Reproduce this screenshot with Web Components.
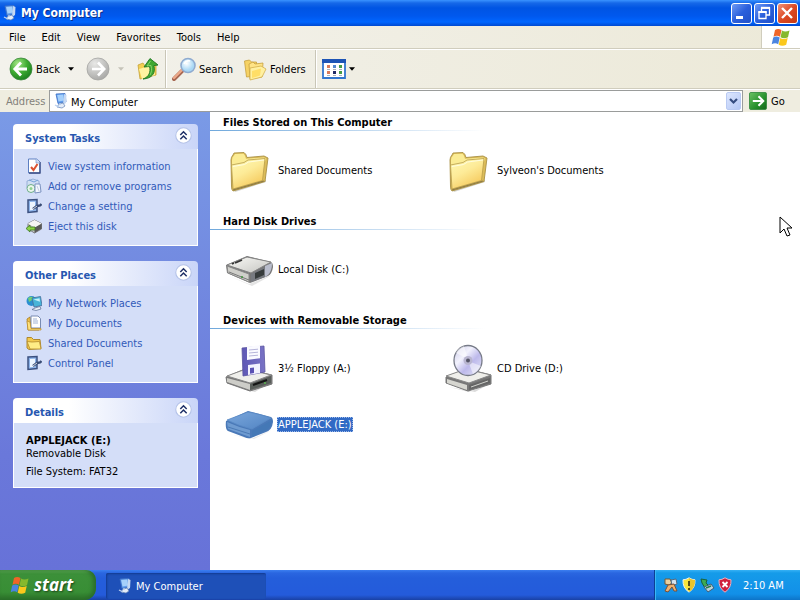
<!DOCTYPE html>
<html lang="en">
<head>
<meta charset="utf-8">
<title>My Computer</title>
<style>
html,body{margin:0;height:100%}
body{font:11px/15px "DejaVu Sans Condensed","DejaVu Sans",Tahoma,sans-serif;color:#000;background:#fff;overflow:hidden}
</style>
</head>
<body>
<xp-desktop></xp-desktop>
<script>
const icons = {
computer:['0 0 16 16',`<path d="M3 1l9-.5 1 8.500-8 1.500z" fill="#5f9bea" stroke="#3c6fc4" stroke-width=".8"/><path d="M4.200 2l6-.4.8 6-5.500 1z" fill="#a5d0fb"/><path d="M11 1l2.500 1-.5 8-3 2z" fill="#c5d8f2"/><path d="M6 11l4-1 2 3-3 2-5-1z" fill="#e5edf8" stroke="#6383b5" stroke-width=".7"/><path d="M2 12l4 2M7 10v2" stroke="#b9cfee" stroke-width="1.300"/>`],
flag:['0 0 20 18',`<path d="M4 2q3-2 6.500 0L9 8.800q-3-2-6.500 0z" fill="#ef6528"/><path d="M11 2.500q3 2 7.500 0L17 9.200q-4 2-7.500 0z" fill="#86b92d"/><path d="M2.200 9.500q3-2 6.500 0L7.200 16.200q-3-2-6.500 0z" fill="#4a84e0"/><path d="M9.200 10q3 2 7.500 0L15.200 16.700q-4 2-7.500 0z" fill="#fbc81c"/>`],
back:['0 0 24 24',`<defs><radialGradient id="g" cx=".35" cy=".25" r=".85"><stop offset="0" stop-color="#a5e586"/><stop offset=".5" stop-color="#3fac32"/><stop offset="1" stop-color="#14781b"/></radialGradient></defs><circle cx="12" cy="12" r="11" fill="url(#g)" stroke="#3a873b" stroke-width=".8"/><path d="M12 5.500L5.800 12l6.200 6.500M6.500 12H18" fill="none" stroke="#fff" stroke-width="2.800"/>`],
forward:['0 0 24 24',`<defs><radialGradient id="g" cx=".35" cy=".25" r=".85"><stop offset="0" stop-color="#e8e8e6"/><stop offset="1" stop-color="#a3a3a1"/></radialGradient></defs><circle cx="12" cy="12" r="11" fill="url(#g)" stroke="#a5a5a2" stroke-width=".8"/><path d="M12 5.500l6.200 6.500-6.200 6.500M17.500 12H6" fill="none" stroke="#fff" stroke-width="2.600"/>`],
up:['0 0 24 24',`<path d="M2 8l5-2 2 3 11-3v12L4 22z" fill="#f3cf52" stroke="#c5a238" stroke-width=".8"/><path d="M3 12l14-4 2 10-13 4z" fill="#fff3a1"/><path d="M7 22c6-2 8-7 6.500-12.500L8 10l6-8.500L22 8l-4.200.6C20 16 16 21.500 7 22z" fill="#3fa832" stroke="#1d7623" stroke-width=".9"/><path d="M14.500 4l-3.500 5 4-.5c1 4 .5 7-1 9.500" fill="none" stroke="#8ed872" stroke-width=".9"/>`],
search:['0 0 24 24',`<defs><radialGradient id="g" cx=".4" cy=".35"><stop offset="0" stop-color="#fff"/><stop offset="1" stop-color="#a9d8f5"/></radialGradient></defs><path d="M2 22l8-8" stroke="#a5644f" stroke-width="4" stroke-linecap="round"/><path d="M2 21l8-8" stroke="#eca98a" stroke-width="2.400" stroke-linecap="round"/><circle cx="16" cy="8.500" r="7" fill="url(#g)" stroke="#8fabd0" stroke-width="1.600"/><path d="M12 7q2-4 6-3" fill="none" stroke="#fff" stroke-width="1.500"/>`],
folders:['0 0 24 24',`<path d="M1.500 4l5-1 2 2h5v14l-10 1z" fill="#f6d264" stroke="#c69f3c" stroke-width=".8"/><path d="M6 7l4-2 2 2 8-1-1 14-12 2z" fill="#ffe486" stroke="#c69f3c" stroke-width=".8"/><path d="M7 11l11-2 5 3-4 8-12 3z" fill="#fff0a0" stroke="#d3b04d" stroke-width=".8"/><path d="M9 14l9-2.500-1 7L9 21z" fill="#ffde66"/>`],
views:['0 0 24 20',`<path d="M1 1h22v18H1z" fill="#fff" stroke="#3176cf" stroke-width="1.800"/><path d="M0 0h24v4H0z" fill="#1d54b5"/><path fill="#d87a5a" d="M5 6h3v3H5zM5 12h3v3H5z"/><path fill="#5689cf" d="M11 6h3v3h-3z"/><path fill="#469b46" d="M17 6h3v3h-3zM17 12h3v3h-3z"/><path fill="#222b67" d="M11 12h3v3h-3z"/><path stroke="#a9b2b8" d="M5 10.500h3m3 0h3m3 0h3M5 16.500h3m3 0h3m3 0h3"/>`],
go:['0 0 19 19',`<defs><linearGradient id="g" x2="1" y2="1"><stop stop-color="#6dc364"/><stop offset=".6" stop-color="#26902b"/><stop offset="1" stop-color="#15661b"/></linearGradient></defs><rect x=".5" y=".5" width="18" height="18" rx="1.500" fill="url(#g)" stroke="#3c8f45"/><path d="M4 9.500h10M10 4.500l5 5-5 5" fill="none" stroke="#fff" stroke-width="2.200"/>`],
chevron:['0 0 9 7',`<path d="M1 1l3.500 3.500L8 1" fill="none" stroke="#354d80" stroke-width="2.200"/>`],
caret:['0 0 7 4',`<path d="M0 0h7L3.500 4z" fill="currentColor"/>`],
collapse:['0 0 16 16',`<circle cx="8" cy="8" r="7.300" fill="#fff" stroke="#b4c2e8"/><path d="M5 7.500l3-3 3 3M5 11.500l3-3 3 3" fill="none" stroke="#1e2f66" stroke-width="1.400"/>`],
min:['0 0 20 20',`<path d="M5 13h7v3H5z" fill="#fff"/>`],
restore:['0 0 20 20',`<path d="M7.500 8V5h8v7H12" fill="none" stroke="#fff" stroke-width="1.300"/><path d="M7 4.800h9" stroke="#fff" stroke-width="2"/><path d="M5 9h7v6.500H5z" fill="none" stroke="#fff" stroke-width="1.300"/><path d="M4.400 9h8.200" stroke="#fff" stroke-width="2"/>`],
close:['0 0 20 20',`<path d="M5 5l10 10M15 5L5 15" stroke="#fff" stroke-width="2.400"/>`],
info:['0 0 16 16',`<path d="M2.500 1h8L14 4v11H2.500z" fill="#fff" stroke="#5c7fc2"/><path d="M14 4v11H3" fill="none" stroke="#3b4c83" stroke-width="1.300"/><path d="M10 1v4h4" fill="#cfddf6" stroke="#7c98cf" stroke-width=".7"/><path d="M5 9l2.500 3L11.500 6" fill="none" stroke="#dc5332" stroke-width="2"/>`],
programs:['0 0 16 16',`<path d="M1 3l6-2 6 2v8l-7 1-5-2z" fill="#d0def4" stroke="#8aa4d0" stroke-width=".8"/><path d="M3 2l5 2 4-2" fill="none" stroke="#76a3d9"/><circle cx="5" cy="10.500" r="4" fill="#ecf6ee" stroke="#6fae8a"/><circle cx="5" cy="10.500" r="1.500" fill="#8fd491"/><path d="M9 6h5l1 8-6 1z" fill="#f4f8ff" stroke="#7a91bf"/><path d="M11 8l2 5" stroke="#c3cee2"/>`],
setting:['0 0 16 16',`<path d="M2 2l9-.5v12L2 14.500z" fill="#8db4ea" stroke="#3c5180" stroke-width="1.500"/><path d="M4 4l5-.3v8L4 12.300z" fill="#eef6ff"/><path d="M7 11l4-3 3-.5 1.500-1.500" fill="none" stroke="#394c75" stroke-width="2.400"/><path d="M7 11l4-3" stroke="#d3d9e4"/>`],
eject:['0 0 16 16',`<path d="M2 5.500L8.500 2l7 3.500V11l-7 4-6.500-4z" fill="#c9c9c9" stroke="#646464" stroke-width=".8"/><path d="M8.500 9.500V15l7-4.500v-5z" fill="#585858"/><path d="M2 5.500L8.500 2l7 3.500-7 4z" fill="#f5f5f5"/><path d="M0 10.500L4 7v2h5v3H4v2z" fill="#8bd448" stroke="#3c7424" stroke-width=".8"/>`],
network:['0 0 16 16',`<circle cx="5.500" cy="6" r="5" fill="#2b8fd0"/><path d="M2 3q3-2 5-1l-1 3-3 2z" fill="#72cf74"/><path d="M6 3l8.500-1.500 1.500 9-8 1.500z" fill="#48b4d8" stroke="#436c99" stroke-width=".8"/><path d="M7.500 4.500l6-1.200.5 3.500z" fill="#c4f1fa"/><path d="M9 13l5-1.500 1 2.500-5 1.500-4-1z" fill="#eef2f8" stroke="#54688e" stroke-width=".7"/>`],
documents:['0 0 16 16',`<path d="M1 4l3-2 1 12 9-1-1 2H2z" fill="#ecc04b" stroke="#a87b20" stroke-width=".8"/><path d="M5 1h7l2.500 2.500V13H5z" fill="#fff" stroke="#788bb3"/><path d="M7 4h4M7 6h5M7 8h5" stroke="#a0b2d4"/><path d="M1 6l3 1 1 6.500H15v1.500H2z" fill="#ffe27c" stroke="#b78a2b" stroke-width=".7"/>`],
smallfolder:['0 0 16 16',`<path d="M1 4V2.500h4.500l2 2H14l1 9-12 1L1 13z" fill="#f3c94d" stroke="#a78022" stroke-width=".9"/><path d="M1 6.500l5 .5 7.500-.5L15 14H4z" fill="#ffec86" stroke="#b99132" stroke-width=".9"/>`],
folder:['0 0 48 48',`<defs><linearGradient id="g" x2=".6" y2="1"><stop stop-color="#fffab4"/><stop offset=".5" stop-color="#fdeb98"/><stop offset="1" stop-color="#f5c95c"/></linearGradient></defs><path d="M8 43l33-9v2L10 46z" fill="#aaa9a0" opacity=".5"/><path d="M6 14q0-3 2-5l1-2 10-.5q2 1 3 5l17-1.500 4 2-3 23.500-32 9.500q-1.500-1-1.500-5z" fill="#dcbc58" stroke="#a99145" stroke-width=".9" stroke-linejoin="round"/><path d="M7 14q0-3 2-4.500l1-1.500 8.500-.3q1.500 1 2.500 5l18-1.200 2 1-1 3-33 6z" fill="#fbec94"/><path d="M6.500 19l12.500-2.500L23 14l17-1.500L37.500 34.500 8 43z" fill="url(#g)" stroke="#b79d4b" stroke-width=".8"/><path d="M8 20.500l11.500-2 4-2.500L39 14" stroke="#fffde0" fill="none"/><path d="M8 44l31-9" stroke="#8d7a44" stroke-width="1.300"/>`],
disk:['0 0 48 48',`<defs><linearGradient id="g" x2="1" y2="1"><stop stop-color="#f9f9f6"/><stop offset="1" stop-color="#c5c5c1"/></linearGradient></defs><path d="M4 31l20 8 23-9-20 11z" fill="#777" opacity=".2"/><path d="M1 20L22 11l24 6q2 1 2 5-1 7-5 9L25 38 2 28z" fill="#777"/><path d="M2 20l20-8 24 5-20 11z" fill="url(#g)" stroke="#858585"/><path d="M2 21l22 8v8L3 28z" fill="#cfcfca" stroke="#888"/><path d="M26 29l14-7v10l-14 5z" fill="#777a80"/><path d="M30 28l9-4v6l-9 4z" fill="#363b3b"/><path d="M40 21l7-3q0 8-4 12l-3 2z" fill="#b9bdcc"/><path d="M10 18l7-3M7 19l2-1" stroke="#333" stroke-width="1.800"/><path d="M4 27l20 8" stroke="#777"/><circle cx="17" cy="32" r="1" fill="#3e943b"/>`],
floppy:['0 0 48 48',`<defs><linearGradient id="g" x2="1"><stop stop-color="#5e57b5"/><stop offset="1" stop-color="#7973c5"/></linearGradient></defs><path d="M5 42l20 5 21-9-16 10z" fill="#888" opacity=".3"/><path d="M1 33l19-8 27 6v9L25 47 2 39z" fill="#777" stroke="#777"/><path d="M2 32l19-7 25 6-21 8z" fill="#efefeb" stroke="#888"/><path d="M2 34l23 6v6L2 38z" fill="#cdcdc8"/><path d="M25 40l21-8v7L25 46z" fill="#585d59"/><path d="M28 41l14-5" stroke="#151515" stroke-width="2"/><circle cx="40" cy="39" r="1" fill="#57b64e"/><path d="M17 4l22-2 1 26-22 4z" fill="url(#g)" stroke="#5b549f" stroke-width=".8"/><path d="M22 2.500l13-1.200v13L22 16z" fill="#fafaff"/><path d="M24 6l9-.8M24 9l9-.8M24 12l9-.8" stroke="#b7b5da"/><path d="M23 21l12-1.500V29l-12 2z" fill="#f3f2ff"/><path d="M25 24l4-.5V29l-4 .7z" fill="#5a51b4"/>`],
cd:['0 0 48 48',`<defs><linearGradient id="g" x2="1" y2="1"><stop stop-color="#c8c7e4"/><stop offset=".35" stop-color="#f2f2fd"/><stop offset=".6" stop-color="#bdb9eb"/><stop offset="1" stop-color="#e7e9f8"/></linearGradient></defs><path d="M5 43l20 5 22-9-16 9z" fill="#888" opacity=".3"/><path d="M2 33l21-8 24 6v9l-23 7-22-8z" fill="#777" stroke="#777"/><path d="M2 32l20-7 25 6-22 8z" fill="#efefeb" stroke="#888"/><path d="M3 35l20 6v5L3 39z" fill="#d6d6d0"/><path d="M25 41l21-7v5l-21 7z" fill="#666"/><path d="M27 43l17-6" stroke="#d1d2cd"/><ellipse cx="24" cy="16.500" rx="14" ry="15" fill="url(#g)" stroke="#777b88" stroke-width="1.300"/><path d="M24 15L12 9q2-5 8-7zM24 17l13 5q-3 6-8 8z" fill="#fff" opacity=".5"/><circle cx="24" cy="16.500" r="4.500" fill="#b9b6d0"/><circle cx="24" cy="16.500" r="2" fill="#555567"/>`],
usb:['0 0 48 48',`<defs><linearGradient id="g" x2="1" y2="1"><stop stop-color="#7ba7dc"/><stop offset="1" stop-color="#5184c3"/></linearGradient></defs><path d="M4 34l22 5 21-9-18 9z" fill="#888" opacity=".2"/><path d="M1 21L23 11l23 6q2 1 2 5-1 8-7 10l-15 6q-3 1-7-1L3 31q-3-2-2-10z" fill="#4a79b8"/><path d="M2 20l21-8q12 2 23 6l-19 11q-13-3-25-9z" fill="url(#g)" stroke="#5c8cc7" stroke-width=".8"/><path d="M2 22q11 5 23 8v7L3 29z" fill="#6f9bd0"/><path d="M27 31l20-11q-1 7-5 10l-15 7z" fill="#4478b6"/><path d="M3 27l22 7" stroke="#4b7ab5"/>`],
keys:['0 0 16 16',`<path d="M2 2h5l2 4-3 2-4-1z" fill="#e8d0a0" stroke="#765833"/><path d="M8 3l5-1 1 5-5 2z" fill="#d5e3ee" stroke="#516a81"/><path d="M5 8l6-1 3 7h-3l-2-4-4 5-3-1z" fill="#edb170" stroke="#795138"/>`],
shield:['0 0 16 16',`<path d="M8 .8q3 2 6 2 .5 8-6 12.400Q1.500 11 2 2.800q3 0 6-2z" fill="#f8e53c" stroke="#e8eef0"/><path d="M8 1q3 2 6 2 .5 8-6 12z" fill="#e8c52c"/><path d="M8 4v5M8 11v2" stroke="#443f16" stroke-width="1.800"/>`],
device:['0 0 16 16',`<path d="M2 2l6 1-1 3 3 3-4 2-3-5z" fill="#3eaa55" stroke="#19633d"/><path d="M5 10l7-3 3 4-6 4z" fill="#bed4dc" stroke="#405e77"/><path d="M7 11l5-2" stroke="#29784a" stroke-width="1.500"/>`],
alert:['0 0 16 16',`<path d="M8 .8q3 2 6 2 .5 8-6 12.400Q1.500 11 2 2.800q3 0 6-2z" fill="#cf203e" stroke="#eab1c0"/><path d="M5.500 5l5 5m0-5l-5 5" stroke="#fff" stroke-width="1.800"/>`],
pointer:['0 0 14 22',`<path d="M1 1v16l4-4 3 7 3-1-3-7h5z" fill="#fff" stroke="#000" stroke-linejoin="round"/>`]
};

const define = (name, css, html) => customElements.define(name, class extends HTMLElement {
  constructor() {
    super();
    const t = document.createElement('template');
    t.innerHTML = `<style>*{box-sizing:border-box}button{font:inherit;color:inherit;background:none;border:0;padding:0;margin:0;text-align:left}a{color:inherit;text-decoration:none}${css}</style>` + (typeof html === 'function' ? html(this) : html);
    this.attachShadow({mode:'open'}).append(t.content.cloneNode(true));
  }
});

define('xp-icon', ':host{display:block;flex:none}svg{display:block}', e => {
  const [box, art] = icons[e.getAttribute('name')];
  return `<svg viewBox="${box}" width="${e.getAttribute('w') || 16}" height="${e.getAttribute('h') || e.getAttribute('w') || 16}" aria-hidden="true">${art}</svg>`;
});

define('xp-titlebar', `
:host{display:flex;align-items:center;flex:none;height:26px;padding:0 2px 0 2px;gap:2px;color:#fff;background:linear-gradient(#3a93ff 0,#1668e8 3px,#0054e3 8px,#0058ee 16px,#0066ff 22px,#0049d0 26px)}
h1{flex:1;margin:0 0 0 1px;font:bold 12px/16px "DejaVu Sans Condensed","DejaVu Sans",sans-serif;text-shadow:1px 1px #0a2f8a}
button{width:21px;height:21px;border:1px solid #fff;border-radius:3px;background:linear-gradient(135deg,#6f9bf5,#2a5fdc 50%,#2150c8)}
.close{background:linear-gradient(135deg,#f0937a,#dd4a24 50%,#c63a14)}
button xp-icon{margin:-1px}`,
`<xp-icon name="computer" w="16"></xp-icon><h1><slot></slot></h1>
<button aria-label="Minimize"><xp-icon name="min" w="20"></xp-icon></button><button aria-label="Restore"><xp-icon name="restore" w="20"></xp-icon></button><button class="close" aria-label="Close"><xp-icon name="close" w="20"></xp-icon></button>`);

define('xp-menubar', `
:host{display:flex;flex:none;height:23px;background:linear-gradient(90deg,#f4f3ee,#ece9d8);border-bottom:1px solid #d0cdbd}
nav{display:flex;flex:1;padding-left:1px}button{padding:0 8px}
.flag{display:grid;place-items:center;width:39px;background:#fff;border-left:1px solid #d0cdbd}`,
`<nav><button>File</button><button>Edit</button><button>View</button><button>Favorites</button><button>Tools</button><button>Help</button></nav><div class="flag"><xp-icon name="flag" w="20" h="18"></xp-icon></div>`);

define('xp-toolbar', `
:host{display:flex;align-items:center;flex:none;height:40px;padding-left:9px;background:linear-gradient(90deg,#f3f2ec,#ece9d8);border-top:1px solid #fff;border-bottom:1px solid #d0cdbd}
button{display:flex;align-items:center;gap:3px}
.caret{padding:6px 4px;margin-left:4px}.off{color:#c5c3b8}.fwd,.up{margin-left:8px}
hr{align-self:stretch;width:2px;margin:0 5px;border:0;border-left:1px solid #c9c6b7;border-right:1px solid #fff}
.folders{margin-left:10px}.second{margin-left:9px}`,
`<button><xp-icon name="back" w="24"></xp-icon>Back</button><button class="caret" aria-label="Back history"><xp-icon name="caret" w="6" h="4"></xp-icon></button>
<button class="fwd" aria-label="Forward" disabled><xp-icon name="forward" w="24"></xp-icon></button><button class="caret off" aria-label="Forward history" disabled><xp-icon name="caret" w="6" h="4"></xp-icon></button>
<button class="up" aria-label="Up"><xp-icon name="up" w="24"></xp-icon></button><hr>
<button><xp-icon name="search" w="24"></xp-icon>Search</button><button class="folders"><xp-icon name="folders" w="24"></xp-icon>Folders</button><hr class="second">
<button aria-label="Views"><xp-icon name="views" w="24" h="20"></xp-icon><xp-icon name="caret" w="6" h="4"></xp-icon></button>`);

define('xp-address', `
:host{display:flex;align-items:stretch;flex:none;height:23px;background:#efede0;border-top:1px solid #fff}
label{display:flex;align-items:center;width:49px;padding-left:6px;color:#83817a}
.field{display:flex;align-items:center;flex:1;gap:2px;padding:0 1px 0 3px;background:#fff;border:1px solid #9a9c9b}
input{flex:1;min-width:0;padding:2px 0 0;border:0;outline:0;font:inherit;color:inherit;background:none}
.drop{display:grid;place-items:center;width:15px;height:18px;border-radius:2px;background:linear-gradient(135deg,#dce6fe,#b5c8f5);border:1px solid #b9caf3}
.go{display:flex;align-items:center;gap:4px;width:57px;padding-left:6px}`,
`<label for="a">Address</label><div class="field"><xp-icon name="computer" w="16"></xp-icon><input id="a" value="My Computer"><button class="drop" aria-label="Show addresses"><xp-icon name="chevron" w="9" h="7"></xp-icon></button></div><button class="go"><xp-icon name="go" w="18"></xp-icon>Go</button>`);

define('xp-panel', `
:host{display:block}
header{display:flex;align-items:center;justify-content:space-between;height:25px;padding:0 6px 0 12px;border-radius:4px 4px 0 0;background:linear-gradient(90deg,#fff 30%,#c9d5f8)}
h2{margin:4px 0 0;font:bold 11px/15px "DejaVu Sans Condensed","DejaVu Sans",sans-serif;color:#2757b0}
button{margin-bottom:2px}
.body{padding:7px 12px 9px;border:1px solid #fff;border-top:0;background:#d4def8}`,
e => `<header><h2>${e.getAttribute('heading')}</h2><button aria-label="Collapse"><xp-icon name="collapse" w="17"></xp-icon></button></header><div class="body"><slot></slot></div>`);

define('xp-task', `:host{display:block}a{display:flex;align-items:center;gap:6px;height:20px;color:#315ab9}`,
e => `<a href="#"><xp-icon name="${e.getAttribute('icon')}" w="16"></xp-icon><slot></slot></a>`);

define('xp-sidebar', `
:host{display:flex;flex-direction:column;flex:none;gap:15px;width:210px;padding:12px 12px 0 13px;background:linear-gradient(#7a9ae6,#6a78da 75%,#6772d8)}
.details{display:flex;flex-direction:column}p{margin:0;line-height:13px}p+p+p{margin-top:5px}.details p:first-child{margin-top:4px}`,
`<xp-panel heading="System Tasks"><xp-task icon="info">View system information</xp-task><xp-task icon="programs">Add or remove programs</xp-task><xp-task icon="setting">Change a setting</xp-task><xp-task icon="eject">Eject this disk</xp-task></xp-panel>
<xp-panel heading="Other Places"><xp-task icon="network">My Network Places</xp-task><xp-task icon="documents">My Documents</xp-task><xp-task icon="smallfolder">Shared Documents</xp-task><xp-task icon="setting">Control Panel</xp-task></xp-panel>
<xp-panel heading="Details"><div class="details"><p><b>APPLEJACK (E:)</b></p><p>Removable Disk</p><p>File System: FAT32</p></div></xp-panel>`);

define('xp-group', `
:host{display:block}
h2{display:flex;align-items:flex-start;height:19px;margin:0 0 11px;padding:3px 0 0 13px;font:bold 11px/15px "DejaVu Sans Condensed","DejaVu Sans",sans-serif;background:linear-gradient(90deg,#70a8dc,#fff) 0 100%/275px 1px no-repeat}
.grid{display:grid;grid-template-columns:repeat(auto-fill,219px);padding-left:15px}`,
e => `<h2>${e.getAttribute('heading')}</h2><div class="grid"><slot></slot></div>`);

define('xp-item', `
:host{display:block}button{display:flex;align-items:center;gap:4px;height:56px}
span{padding:0 1px}:host([selected]) span{color:#fff;background:#316ac5;outline:1px dotted #9db9e8;outline-offset:-1px}`,
e => `<button><xp-icon name="${e.getAttribute('icon')}" w="48"></xp-icon><span><slot></slot></span></button>`);

define('xp-content', `:host{display:flex;flex-direction:column;gap:13px;flex:1;min-width:0;background:#fff}`,
`<xp-group heading="Files Stored on This Computer"><xp-item icon="folder">Shared Documents</xp-item><xp-item icon="folder">Sylveon's Documents</xp-item></xp-group>
<xp-group heading="Hard Disk Drives"><xp-item icon="disk">Local Disk (C:)</xp-item></xp-group>
<xp-group heading="Devices with Removable Storage"><xp-item icon="floppy">3½ Floppy (A:)</xp-item><xp-item icon="cd">CD Drive (D:)</xp-item><xp-item icon="usb" selected>APPLEJACK (E:)</xp-item></xp-group>`);

define('xp-taskbar', `
:host{display:flex;flex:none;height:30px;color:#fff;background:linear-gradient(#3b7ff0 0,#2a66e0 3px,#245edb 8px,#245bdb 25px,#1941a5)}
.start{display:flex;align-items:center;gap:4px;width:96px;padding-left:10px;border-radius:0 10px 12px 0;background:linear-gradient(#5eac56 0,#3c9039 4px,#388e35 22px,#2a6f28);box-shadow:inset -3px 0 4px #2a6c2a;font:italic bold 17px/24px "Open Sans","Noto Sans",sans-serif;text-shadow:1px 1px 2px #1a4419}
.task{display:flex;align-items:center;gap:3px;width:160px;margin:3px 0 1px 10px;padding-left:11px;border-radius:2px;background:#1e50b8;box-shadow:inset 1px 1px 2px #123a90}
.tray{display:flex;align-items:center;gap:2px;width:146px;margin-left:auto;padding-left:8px;border-left:1px solid #0c3f94;background:linear-gradient(#36b1f5 0,#159be9 3px,#1290e8 24px,#0d74c8);box-shadow:inset 1px 0 #3bb7f5}
time{margin-left:8px;white-space:nowrap}`,
`<button class="start"><xp-icon name="flag" w="20" h="18"></xp-icon>start</button><button class="task"><xp-icon name="computer" w="16"></xp-icon>My Computer</button>
<div class="tray"><xp-icon name="keys"></xp-icon><xp-icon name="shield"></xp-icon><xp-icon name="device"></xp-icon><xp-icon name="alert"></xp-icon><time datetime="02:10">2:10 AM</time></div>`);

define('xp-desktop', `
:host{display:flex;flex-direction:column;height:100vh;position:relative}
main{display:flex;flex:1;min-height:0}.pointer{position:absolute;left:779px;top:216px}`,
`<xp-titlebar>My Computer</xp-titlebar><xp-menubar></xp-menubar><xp-toolbar></xp-toolbar><xp-address></xp-address><main><xp-sidebar></xp-sidebar><xp-content></xp-content></main><xp-taskbar></xp-taskbar><xp-icon class="pointer" name="pointer" w="14" h="22"></xp-icon>`);
</script>
</body>
</html>
